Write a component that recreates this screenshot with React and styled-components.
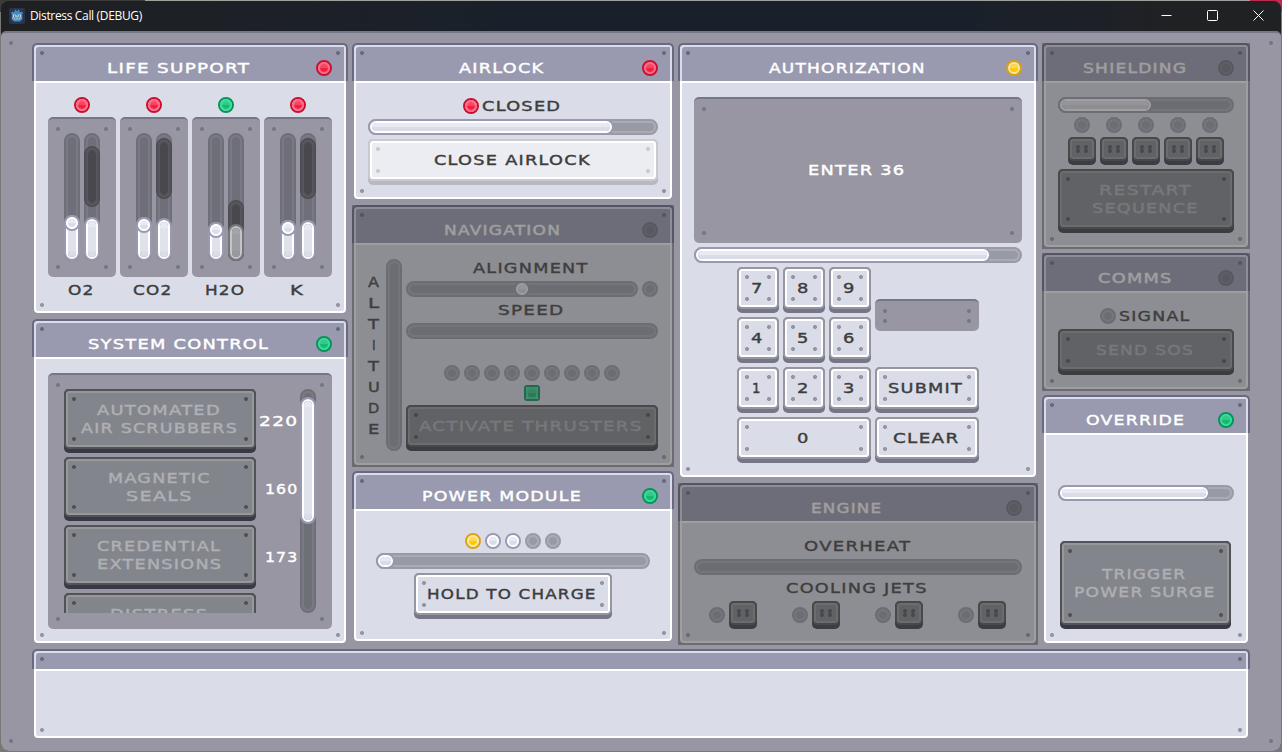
import React, { useLayoutEffect, useRef, useState } from "react";
import styled, { createGlobalStyle, css } from "styled-components";

const GlobalStyle = createGlobalStyle`
  * { box-sizing: border-box; }
  body {
    margin: 0;
    overflow: hidden;
    background: #7c7d7a;
  }
`;

const ink = "#3d3d3d";

const skins = {
  off: { outer: "rgba(44,48,52,0.38)", ring: "rgba(44,48,52,0.28)", hi: "rgba(44,48,52,0.38)", lo: "rgba(44,48,52,0.38)" },
  dark: { outer: "#4d4d53", ring: "#55555b", hi: "#48484e", lo: "#48484e" },
  white: { outer: "#999ab1", ring: "#ffffff", hi: "#e8e9f2", lo: "#dadce8", mid: "#e0e2ec" },
  dim: { outer: "#75767e", ring: "#c4c5c6", hi: "#a3a4aa", lo: "#97989f", mid: "#9d9ea4" },
  red: { outer: "#c90f30", ring: "#ff6680", hi: "#ff4261", lo: "#f01f43" },
  green: { outer: "#049359", ring: "#31de94", hi: "#2ccc89", lo: "#16b774" },
  yellow: { outer: "#dc9f16", ring: "#ffe896", hi: "#ffd84d", lo: "#fccb00" },
};

const keySkins = {
  light: { edge: "#9596a2", rim: "#ffffff", face: "#dadce8", base: "#757687", text: ink },
  pressed: { edge: "#c9cad0", rim: "#ffffff", face: "#ecedf2", base: "#b7b8c2", text: ink },
  disabled: { edge: "#52525b", rim: "#979998", face: "#82858c", base: "#393847", text: "#afb0b4" },
};

const dot = (color, pos) =>
  `radial-gradient(circle at 2px 2px, ${color} 1.7px, transparent 2.3px) ${pos} / 4px 4px no-repeat`;

const screws = (color) =>
  ["0 0", "100% 0", "0 100%", "100% 100%"].map((pos) => dot(color, pos)).join(",");

/* window */

const Desktop = styled.div`
  width: 1282px;
  height: 752px;
  padding: 1px 1px 1px 1px;
  background: linear-gradient(90deg, #3b3b3c 0 145px, #a0a19c 145px 1250px, #c22a4c 1250px) 0 0 / 100% 12px no-repeat, #787977;
`;

const Window = styled.div`
  height: 750px;
  border-radius: 8px;
  overflow: hidden;
  display: flex;
  flex-direction: column;
  background: #1e2026;
`;

const TitleBar = styled.div`
  height: 30px;
  flex: none;
  display: flex;
  align-items: center;
  padding-left: 8px;
  background: linear-gradient(90deg, #1f2022, #1a202b 40%, #1a202b 75%, #202122 95%);
`;

const TitleText = styled.span`
  flex: 1;
  margin: -2px 0 0 5px;
  font: 12px "Open Sans", "Noto Sans", sans-serif;
  letter-spacing: -0.34px;
  color: #ffffff;
`;

const WindowControl = styled.span`
  width: 46px;
  height: 30px;
  padding-bottom: 2px;
  display: flex;
  align-items: center;
  justify-content: center;
`;

const Console = styled.div`
  position: relative;
  flex: 1;
  border-top: 2px solid #757687;
  border-radius: 5px 5px 0 0;
  padding: 10px 31px 0;
  background: #9796a2;
  display: flex;
  flex-direction: column;
  gap: 4px;
  &::after {
    content: "";
    position: absolute;
    inset: 8px;
    pointer-events: none;
    background: ${screws("#757687")};
  }
`;

const Columns = styled.div`
  display: grid;
  grid-template-columns: 316px 322px 360px 208px;
  gap: 4px;
  height: 602px;
`;

const Column = styled.div`
  display: flex;
  flex-direction: column;
  gap: 4px;
`;

/* panels */

const PanelBox = styled.section`
  position: relative;
  flex: none;
  height: ${(props) => props.$height}px;
  display: flex;
  flex-direction: column;
  &::after {
    content: "";
    position: absolute;
    inset: 0;
    pointer-events: none;
    background: ${(props) => (props.$locked ? "rgba(64,64,64,0.5)" : "none")};
  }
`;

const PanelHeader = styled.header`
  position: relative;
  height: ${(props) => (props.$slim ? 20 : 38)}px;
  flex: none;
  display: flex;
  align-items: center;
  gap: 4px;
  padding: ${(props) => (props.$slim ? 0 : "10px 14px 0")};
  border: 2px solid #686a84;
  border-bottom: 0;
  border-radius: 5px 5px 0 0;
  background: #999ab0;
  box-shadow: inset 2px 2px 0 #dadcea, inset -2px 0 0 #dadcea;
  &::after {
    content: "";
    position: absolute;
    inset: 6px 6px auto;
    height: 4px;
    background: ${dot("#686a80", "0 0")}, ${dot("#686a80", "100% 0")};
  }
`;

const PanelTitle = styled.div`
  flex: 1;
  display: flex;
  justify-content: center;
  color: #ffffff;
`;

const PanelBody = styled.div`
  position: relative;
  flex: 1;
  margin: 0 2px 2px;
  padding: 14px 12px 12px;
  border: 2px solid #ffffff;
  border-radius: 0 0 4px 4px;
  background: #dadce8;
  display: flex;
  flex-direction: column;
  gap: 4px;
  color: ${ink};
  &::after {
    content: "";
    position: absolute;
    inset: auto 4px 4px;
    height: 4px;
    background: ${dot("#9596a2", "0 0")}, ${dot("#9596a2", "100% 0")};
  }
`;

const Inset = styled.div`
  position: relative;
  display: flex;
  justify-content: center;
  align-items: ${(props) => (props.$center ? "center" : "stretch")};
  gap: 4px;
  width: ${(props) => (props.$width ? props.$width + "px" : "auto")};
  height: ${(props) => props.$height}px;
  padding: ${(props) => (props.$center ? "0 0 2px" : "14px 16px 16px")};
  border-top: 2px solid #757687;
  border-radius: 5px;
  background: #9796a2;
  color: #ffffff;
  &::after {
    content: "";
    position: absolute;
    inset: 8px;
    pointer-events: none;
    background: ${screws("#757687")};
  }
`;

const Row = styled.div`
  display: flex;
  align-items: ${(props) => props.$align || "center"};
  justify-content: center;
  gap: 4px;
  min-height: ${(props) => props.$height || 0}px;
`;

const Stack = styled.div`
  display: flex;
  flex-direction: column;
  gap: 4px;
  padding: ${(props) => props.$padding || 0};
  align-items: ${(props) => props.$align || "stretch"};
  flex: ${(props) => (props.$grow ? 1 : "none")};
  justify-content: ${(props) => (props.$middle ? "center" : "flex-start")};
`;

/* lamps, bars and tracks all share the same double ring */

const shade = ({ $skin, $tall }) => {
  const { hi, lo, mid } = skins[$skin];
  if ($tall && mid) {
    return `linear-gradient(${hi} 6px, ${mid} 6px calc(100% - 6px), ${lo} calc(100% - 6px))`;
  }
  return `linear-gradient(${hi} 50%, ${lo} 50%)`;
};

const ring = css`
  border: 2px solid ${(props) => skins[props.$skin].outer};
  background: transparent;
  &::before {
    content: "";
    position: absolute;
    inset: 0;
    border: 2px solid ${(props) => skins[props.$skin].ring};
    border-radius: inherit;
    background: ${shade} padding-box;
  }
`;

const Lamp = styled.span`
  position: relative;
  flex: none;
  display: block;
  width: 16px;
  height: 16px;
  border-radius: ${(props) => (props.$square ? 3 : 8)}px;
  ${ring}
`;

const Track = styled.div`
  position: relative;
  flex: ${(props) => (props.$grow ? 1 : "none")};
  width: ${(props) => (props.$vertical ? "16px" : "auto")};
  height: ${(props) => (props.$vertical ? "auto" : "16px")};
  border-radius: 8px;
  ${ring}
`;

const Fill = styled.div`
  position: absolute;
  border-radius: 8px;
  ${ring}
`;

/* keys */

const Key = styled.button`
  flex: none;
  display: flex;
  width: ${(props) => (props.$width ? props.$width + "px" : "auto")};
  height: ${(props) => props.$height || 46}px;
  padding: 0 0 4px;
  border: 0;
  border-radius: 5px;
  text-align: left;
  grid-column: span ${(props) => props.$span || 1};
  background: ${(props) => keySkins[props.$skin].base};
  color: ${(props) => keySkins[props.$skin].text};
`;

const KeyFace = styled.span`
  position: relative;
  flex: 1;
  align-self: stretch;
  display: flex;
  flex-direction: column;
  align-items: center;
  justify-content: center;
  border: 2px solid ${(props) => keySkins[props.$skin].edge};
  border-radius: 5px;
  background: ${(props) => keySkins[props.$skin].face};
  box-shadow: inset 0 0 0 2px ${(props) => keySkins[props.$skin].rim};
  &::after {
    content: "";
    position: absolute;
    inset: 6px;
    background: ${(props) => screws(keySkins[props.$skin].edge)};
  }
`;

const LabelBox = styled.span`
  display: block;
  flex: none;
  height: 18px;
  width: ${(props) => props.$width}px;
  margin-right: 3px;
`;

const LabelText = styled.span`
  display: inline-block;
  margin-left: -1px;
  transform-origin: 0 50%;
  white-space: nowrap;
  font: 14px/18px "DejaVu Sans", sans-serif;
  letter-spacing: 1px;
  -webkit-text-stroke: 0.4px currentColor;
`;

const Altitude = styled.div`
  width: 14px;
  display: flex;
  flex-direction: column;
  justify-content: center;
  gap: 3px;
`;

const AltitudeLetter = styled.span`
  width: 14px;
  display: flex;
  justify-content: center;
`;

const Upgrades = styled.div`
  width: 236px;
  height: 224px;
  overflow: hidden;
  display: flex;
  flex-direction: column;
  gap: 4px;
  margin-right: -4px;
`;

const Upgrade = styled.div`
  flex: none;
  display: flex;
  align-items: center;
  justify-content: space-between;
  height: 64px;
`;

const Keypad = styled.div`
  display: grid;
  grid-template-columns: 42px 42px 42px 104px;
  grid-auto-rows: 46px;
  gap: 4px;
  justify-content: center;
`;

const Display = styled.div`
  grid-column: 4;
  grid-row: 1 / span 2;
  align-self: center;
`;

const Jets = styled.div`
  display: grid;
  grid-template-columns: repeat(4, 79px);
  gap: 4px;
  padding-right: 1px;
  margin-left: -1px;
`;

// Stretches the lettering to the wide display face
const Label = ({ text, width }) => {
  const ref = useRef(null);
  const [scale, setScale] = useState(1);

  useLayoutEffect(() => {
    const natural = ref.current.offsetWidth - 1;
    if (natural > 0) {
      setScale((width + 1.5) / natural);
    }
  }, [text, width]);

  return (
    <LabelBox $width={width}>
      <LabelText ref={ref} style={{ transform: `scaleX(${scale})` }}>{text}</LabelText>
    </LabelBox>
  );
};

const Button = ({ skin = "light", width, height, span, lines = [] }) => (
  <Key $skin={skin} $width={width} $height={height} $span={span}>
    <KeyFace $skin={skin}>
      {lines.map(([text, w], index) => (
        <Label key={index} text={text} width={w} />
      ))}
    </KeyFace>
  </Key>
);

const Panel = ({ title, titleWidth, lamp = "off", height, locked, children }) => (
  <PanelBox $height={height} $locked={locked}>
    <PanelHeader $slim={!title}>
      {title && <PanelTitle><Label text={title} width={titleWidth} /></PanelTitle>}
      {title && <Lamp $skin={lamp} />}
    </PanelHeader>
    <PanelBody>{children}</PanelBody>
  </PanelBox>
);

const Bar = ({ value }) => (
  <Track $skin="off">
    {value && <Fill $skin="white" style={{ left: -2, top: -2, height: 16, width: value }} />}
  </Track>
);

const gases = [
  { name: "O2", width: 24, lamp: "red", target: 13, knob: 82, level: 84 },
  { name: "CO2", width: 37, lamp: "red", target: 5, knob: 84, level: 85 },
  { name: "H2O", width: 37, lamp: "green", target: 67, knob: 89, level: 91, skin: "dim" },
  { name: "K", width: 11, lamp: "red", target: 5, knob: 87, level: 87 },
];

const upgrades = [
  { lines: [["AUTOMATED", 121], ["AIR SCRUBBERS", 154]], cost: "220", width: 37 },
  { lines: [["MAGNETIC", 100], ["SEALS", 64]], cost: "160", width: 31 },
  { lines: [["CREDENTIAL", 122], ["EXTENSIONS", 122]], cost: "173", width: 31 },
  { lines: [["DISTRESS", 96], ["", 0]] },
];

const VerticalFill = ({ skin = "white", top, height }) => (
  <Fill $skin={skin} $tall={height > 16} style={{ left: -2, width: 16, top: top - 2, height }} />
);

const Gas = ({ gas }) => (
  <Stack $align="center">
    <Lamp $skin={gas.lamp} />
    <Inset $width={68} $height={160}>
      <Track $skin="off" $vertical>
        <VerticalFill top={gas.knob} height={128 - gas.knob} />
        <VerticalFill top={gas.knob} height={16} />
      </Track>
      <Track $skin="off" $vertical>
        <VerticalFill skin="dark" top={gas.target} height={61} />
        <VerticalFill skin={gas.skin} top={gas.level} height={128 - gas.level} />
      </Track>
    </Inset>
    <Label text={gas.name} width={gas.width} />
  </Stack>
);

const GodotIcon = () => (
  <svg width="16" height="16" viewBox="0 0 16 16">
    <rect width="16" height="16" rx="2" fill="#2a3450" />
    <path d="M2 5l1.5-1.6L5 4.2l.8-.4L5.6 2 7 1.5l.7 1.7h.7L9 1.5l1.5.5-.2 1.8.8.4 1.5-.8L14 5l-.8 1.4v5L11 13.5H5L2.8 11.4v-5z" fill="#478cbf" />
    <path d="M2.8 10h2.4l.4 1.3h1.7L7.6 10h.9l.3 1.3h1.7l.4-1.3h2.3" fill="none" stroke="#a9cbe4" strokeWidth="0.7" />
    <circle cx="5.3" cy="8" r="1.4" fill="#fff" />
    <circle cx="10.7" cy="8" r="1.4" fill="#fff" />
    <circle cx="5.4" cy="8.1" r="0.8" fill="#414042" />
    <circle cx="10.6" cy="8.1" r="0.8" fill="#414042" />
    <path d="M8 7.4v1.8" stroke="#fff" strokeWidth="0.9" />
  </svg>
);

const controls = ["M0.5 5.5h10", "M0.5 1.5a1 1 0 0 1 1-1h8a1 1 0 0 1 1 1v8a1 1 0 0 1-1 1h-8a1 1 0 0 1-1-1z", "M0.5 0.5l10 10M10.5 0.5l-10 10"];

const digit = (text) => <Button key={text} lines={[[text, text === "1" ? 7 : 10]]} />;

const App = () => (
  <Desktop>
    <GlobalStyle />
    <Window>
      <TitleBar>
        <GodotIcon />
        <TitleText>Distress Call (DEBUG)</TitleText>
        {controls.map((d) => (
          <WindowControl key={d}>
            <svg width="11" height="11" viewBox="0 0 11 11">
              <path d={d} fill="none" stroke="#ffffff" />
            </svg>
          </WindowControl>
        ))}
      </TitleBar>
      <Console>
        <Columns>
          <Column>
            <Panel title="LIFE SUPPORT" titleWidth={141} lamp="red" height={272}>
              <Row>
                {gases.map((gas) => <Gas key={gas.name} gas={gas} />)}
              </Row>
            </Panel>
            <Panel title="SYSTEM CONTROL" titleWidth={179} lamp="green" height={326}>
              <Inset $height={256}>
                <Upgrades>
                  {upgrades.map((item, index) => (
                    <Upgrade key={index}>
                      <Button skin="disabled" width={192} height={64} lines={item.lines} />
                      {item.cost && <Label text={item.cost} width={item.width} />}
                    </Upgrade>
                  ))}
                </Upgrades>
                <Track $skin="off" $vertical>
                  <VerticalFill top={8} height={127} />
                </Track>
              </Inset>
            </Panel>
          </Column>

          <Column>
            <Panel title="AIRLOCK" titleWidth={83} lamp="red" height={158}>
              <Row $height={18}>
                <Lamp $skin="red" />
                <Label text="CLOSED" width={77} />
              </Row>
              <Bar value={246} />
              <Button skin="pressed" lines={[["CLOSE AIRLOCK", 154]]} />
            </Panel>
            <Panel title="NAVIGATION" titleWidth={114} height={262} locked>
              <Row $align="stretch">
                <Altitude>
                  {"ALTITUDE".split("").map((letter, index) => (
                    <AltitudeLetter key={index}>
                      <Label text={letter} width={letter === "I" ? 2 : 10} />
                    </AltitudeLetter>
                  ))}
                </Altitude>
                <Track $skin="off" $vertical />
                <Stack $grow>
                  <Row $height={18}><Label text="ALIGNMENT" width={113} /></Row>
                  <Row>
                    <Track $skin="off" $grow>
                      <Fill $skin="white" style={{ left: 106, top: -2, width: 16, height: 16 }} />
                    </Track>
                    <Lamp $skin="off" />
                  </Row>
                  <Row $height={18}><Label text="SPEED" width={64} /></Row>
                  <Track $skin="off" />
                  <Row $height={18} />
                  <Row>
                    {[...Array(9)].map((_, index) => <Lamp key={index} $skin="off" />)}
                  </Row>
                  <Row><Lamp $skin="green" $square /></Row>
                  <Button skin="disabled" lines={[["ACTIVATE THRUSTERS", 221]]} />
                </Stack>
              </Row>
            </Panel>
            <Panel title="POWER MODULE" titleWidth={157} lamp="green" height={172}>
              <Stack $padding="8px 8px 0">
                <Row>
                  {["yellow", "white", "white", "off", "off"].map((skin, index) => (
                    <Lamp key={index} $skin={skin} />
                  ))}
                </Row>
                <Bar value={19} />
                <Row><Button width={198} lines={[["HOLD TO CHARGE", 167]]} /></Row>
              </Stack>
            </Panel>
          </Column>

          <Column>
            <Panel title="AUTHORIZATION" titleWidth={154} lamp="yellow" height={436}>
              <Inset $height={146} $center>
                <Label text="ENTER 36" width={95} />
              </Inset>
              <Bar value={297} />
              <Keypad>
                {["7", "8", "9"].map(digit)}
                <Display><Inset $height={32} /></Display>
                {["4", "5", "6"].map(digit)}
                {["1", "2", "3"].map(digit)}
                <Button lines={[["SUBMIT", 73]]} />
                <Button span={3} lines={[["0", 10]]} />
                <Button lines={[["CLEAR", 64]]} />
              </Keypad>
            </Panel>
            <Panel title="ENGINE" titleWidth={69} height={162} locked>
              <Row $height={18}><Label text="OVERHEAT" width={104} /></Row>
              <Bar />
              <Row $height={18}><Label text="COOLING JETS" width={139} /></Row>
              <Jets>
                {[0, 1, 2, 3].map((jet) => (
                  <Row key={jet}>
                    <Lamp $skin="off" />
                    <Button skin="disabled" width={28} height={28} />
                  </Row>
                ))}
              </Jets>
            </Panel>
          </Column>

          <Column>
            <Panel title="SHIELDING" titleWidth={101} height={206} locked>
              <Bar value={95} />
              <Row>
                {[0, 1, 2, 3, 4].map((cell) => (
                  <Stack key={cell} $align="center">
                    <Lamp $skin="off" />
                    <Button skin="disabled" width={28} height={28} />
                  </Stack>
                ))}
              </Row>
              <Button skin="disabled" height={64} lines={[["RESTART", 90], ["SEQUENCE", 104]]} />
            </Panel>
            <Panel title="COMMS" titleWidth={72} height={138} locked>
              <Row $height={18}>
                <Lamp $skin="off" />
                <Label text="SIGNAL" width={69} />
              </Row>
              <Button skin="disabled" lines={[["SEND SOS", 95]]} />
            </Panel>
            <Panel title="OVERRIDE" titleWidth={96} lamp="green" height={250}>
              <Stack $grow $middle>
                <Bar value={152} />
              </Stack>
              <Stack $align="flex-start" $padding="0 0 0 2px">
                <Button skin="disabled" width={171} height={88} lines={[["TRIGGER", 82], ["POWER SURGE", 139]]} />
              </Stack>
            </Panel>
          </Column>
        </Columns>
        <Panel height={91} />
      </Console>
    </Window>
  </Desktop>
);

export default App;
